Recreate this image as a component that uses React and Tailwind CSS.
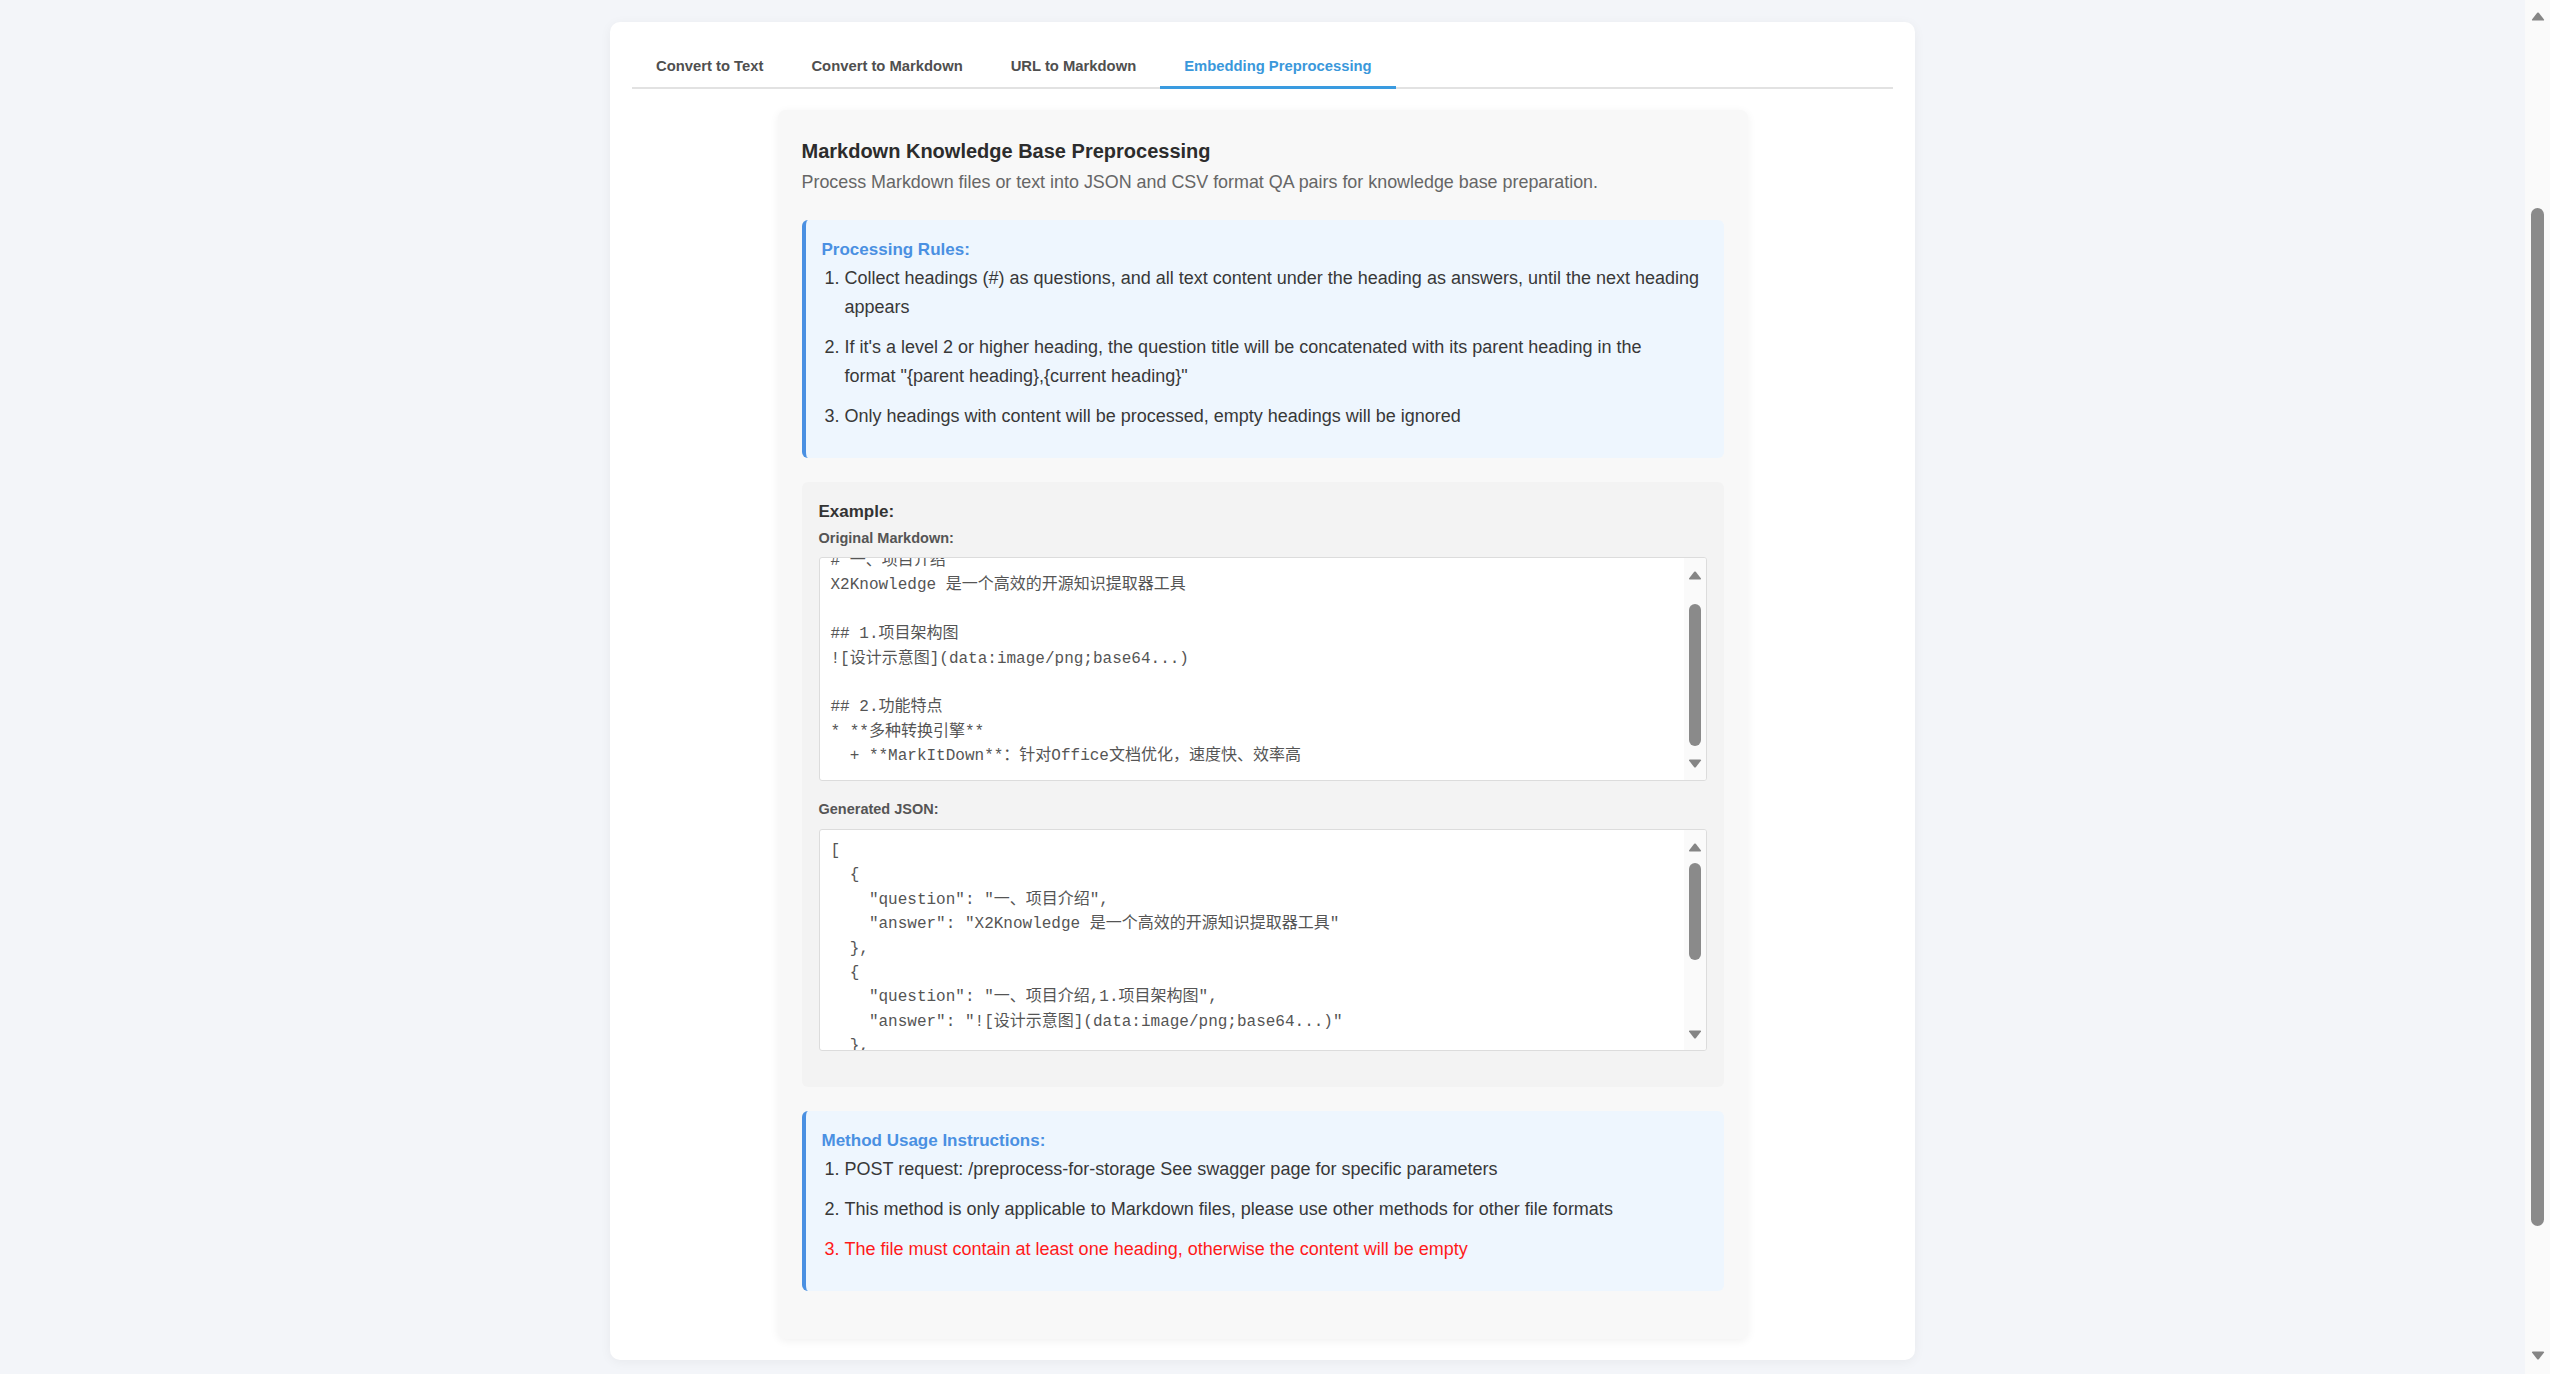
import React from 'react';

const TABS = ['Convert to Text', 'Convert to Markdown', 'URL to Markdown', 'Embedding Preprocessing'];

const MARKDOWN_SAMPLE = `# 一、项目介绍
X2Knowledge 是一个高效的开源知识提取器工具

## 1.项目架构图
![设计示意图](data:image/png;base64...)

## 2.功能特点
* **多种转换引擎**
  + **MarkItDown**：针对Office文档优化，速度快、效率高`;

const JSON_SAMPLE = `[
  {
    "question": "一、项目介绍",
    "answer": "X2Knowledge 是一个高效的开源知识提取器工具"
  },
  {
    "question": "一、项目介绍,1.项目架构图",
    "answer": "![设计示意图](data:image/png;base64...)"
  },
  {
    "question": "一、项目介绍,2.功能特点",`;

// little triangle used on the fake scrollbars
function Arrow({ down = false, className = '' }) {
  return (
    <svg width="14" height="9" viewBox="0 0 14 9" className={className}>
      {down ? (
        <path d="M1 1.5 Q0.5 0.5 2 0.5 H12 Q13.5 0.5 13 1.5 L7.8 8.2 Q7 9 6.2 8.2 Z" fill="#858585" />
      ) : (
        <path d="M1 7.5 Q0.5 8.5 2 8.5 H12 Q13.5 8.5 13 7.5 L7.8 0.8 Q7 0 6.2 0.8 Z" fill="#858585" />
      )}
    </svg>
  );
}

const Tab = ({ label, active }) => (
  <div
    className={`-mb-[2px] border-b-[3px] px-6 pt-[14px] pb-[10px] text-[14.8px] leading-5 font-bold ${
      active ? 'border-[#3a9be0] text-[#3a98db]' : 'border-transparent text-[#4f4f4f]'
    }`}
  >
    {label}
  </div>
);

const InfoBox = ({ title, children, className = '' }) => (
  <div className={`rounded-md border-l-4 border-[#4a90e2] bg-[#eef6fe] pt-[18px] pb-4 pl-4 pr-[20px] ${className}`}>
    <h3 className="text-[17px] leading-6 font-bold text-[#4a90e2]">{title}</h3>
    <ol className="mt-[2px] list-decimal pl-[23px] text-[18px] leading-[29px] text-[#383838]">{children}</ol>
  </div>
);

const CodeBox = ({ code, offset, className = '', bar }) => (
  <div className={`flex overflow-hidden rounded-[3px] border border-[#dcdcdc] bg-white ${className}`}>
    <div className="min-w-0 flex-1 overflow-hidden pt-[9px] pl-[11px]">
      <pre
        className={`${offset} whitespace-pre font-['Liberation_Mono','Noto_Sans_CJK_SC',monospace] text-[16px] leading-[24.4px] text-[#555]`}
      >
        {code}
      </pre>
    </div>
    {/* scrollbar */}
    <div className="flex w-[22px] flex-col items-center bg-[#fafafa]">
      <Arrow className={bar.up} />
      <div className={`w-[12px] rounded-full bg-[#8a8a8a] ${bar.thumb}`} />
      <div className="flex-1" />
      <Arrow down className={bar.down} />
    </div>
  </div>
);

export default function App() {
  return (
    <div className="flex h-[1374px] w-full overflow-hidden bg-[#f3f5f9] font-['Liberation_Sans',Arial,sans-serif]">
      <main className="min-w-0 flex-1 overflow-hidden pt-[22px]">
        <div className="mx-auto w-[1305px] rounded-[10px] bg-white px-[22px] pt-[20px] pb-[21px] shadow-[0_2px_12px_rgba(0,0,0,0.05)]">
          {/* Tabs */}
          <nav className="flex border-b-2 border-[#e2e2e2]">
            {TABS.map((t, i) => (
              <Tab key={t} label={t} active={i === 3} />
            ))}
          </nav>

          {/* Panel */}
          <section className="mx-auto mt-[21px] w-[970px] rounded-lg bg-[#f8f8f8] px-6 pt-[27px] pb-12 shadow-[0_2px_10px_rgba(0,0,0,0.06)]">
            <h2 className="text-[20px] leading-[28px] font-bold text-[#2c2c2c]">Markdown Knowledge Base Preprocessing</h2>
            <p className="mt-[4px] text-[17.9px] leading-[26px] text-[#666]">
              Process Markdown files or text into JSON and CSV format QA pairs for knowledge base preparation.
            </p>

            <InfoBox title="Processing Rules:" className="mt-[25px]">
              <li className="mb-[11px]">
                Collect headings (#) as questions, and all text content under the heading as answers, until the next heading appears
              </li>
              <li className="mb-[11px]">
                If it's a level 2 or higher heading, the question title will be concatenated with its parent heading in the
                <br />
                format "{'{'}parent heading{'}'},{'{'}current heading{'}'}"
              </li>
              <li className="mb-[11px]">Only headings with content will be processed, empty headings will be ignored</li>
            </InfoBox>

            {/* Example */}
            <div className="mt-6 rounded-md bg-[#f3f3f3] px-[17px] pt-[18px] pb-[36px]">
              <h4 className="text-[17px] leading-6 font-bold text-[#333]">Example:</h4>
              <div className="mt-[4px] text-[14.5px] leading-5 font-bold text-[#555]">Original Markdown:</div>
              <CodeBox
                code={MARKDOWN_SAMPLE}
                offset="-mt-[18px]"
                className="mt-[9px] h-[224px]"
                bar={{ up: 'mt-[13px]', thumb: 'mt-[24px] h-[142px]', down: 'mb-[12px]' }}
              />
              <div className="mt-[18px] text-[14.5px] leading-5 font-bold text-[#555]">Generated JSON:</div>
              <CodeBox
                code={JSON_SAMPLE}
                offset=""
                className="mt-[10px] h-[222px]"
                bar={{ up: 'mt-[13px]', thumb: 'mt-[11px] h-[97px]', down: 'mb-[11px]' }}
              />
            </div>

            <InfoBox title="Method Usage Instructions:" className="mt-6">
              <li className="mb-[11px]">POST request: /preprocess-for-storage See swagger page for specific parameters</li>
              <li className="mb-[11px]">This method is only applicable to Markdown files, please use other methods for other file formats</li>
              <li className="mb-[11px] text-[#ff1a1a]">The file must contain at least one heading, otherwise the content will be empty</li>
            </InfoBox>
          </section>
        </div>
      </main>

      {/* page scrollbar */}
      <aside className="flex w-[25px] flex-col items-center bg-[#fafafa]">
        <Arrow className="mt-[12px]" />
        <div className="mt-[187px] h-[1018px] w-[13px] rounded-full bg-[#8a8a8a]" />
        <div className="flex-1" />
        <Arrow down className="mb-[14px]" />
      </aside>
    </div>
  );
}
